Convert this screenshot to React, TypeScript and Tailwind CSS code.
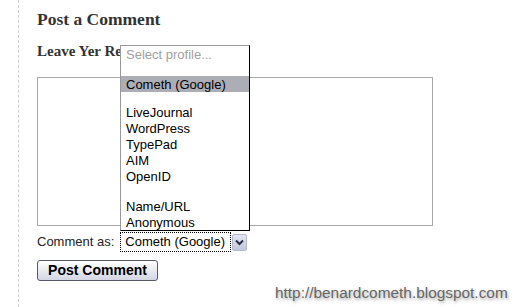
import React from 'react';

const profiles = [
  { label: 'Select profile...', muted: true },
  { gap: 14 },
  { label: 'Cometh (Google)', active: true },
  { gap: 12 },
  { label: 'LiveJournal' },
  { label: 'WordPress' },
  { label: 'TypePad' },
  { label: 'AIM' },
  { label: 'OpenID' },
  { gap: 14 },
  { label: 'Name/URL' },
  { label: 'Anonymous' },
];

function ProfileList() {
  return (
    <div className="absolute left-[120px] top-[45px] w-[130px] h-[186px] bg-white border border-t-[#999] border-l-[#999] border-r-black border-b-black font-['Liberation_Sans',sans-serif] text-[13px] leading-[16px]">
      {profiles.map((p, i) =>
        p.gap ? (
          <div key={i} style={{ height: p.gap }} />
        ) : (
          <div
            key={i}
            className={
              'h-4 pl-[5px] pt-[1px] whitespace-nowrap ' +
              (p.active ? 'bg-[#adadb5] text-black' : p.muted ? 'text-[#a0a0a0]' : 'text-black')
            }
          >
            {p.label}
          </div>
        )
      )}
    </div>
  );
}

export default function App() {
  return (
    <div className="relative w-[523px] h-[307px] overflow-hidden bg-white">
      <div className="ml-[18px] h-full border-l border-dashed border-[#cfcfcf] pl-[18px] pt-[9px]">
        <h3 className="font-['Liberation_Serif',serif] font-bold text-[17.5px] leading-[20px] text-[#333]">
          Post a Comment
        </h3>
        <p className="mt-[13px] w-[83px] overflow-hidden whitespace-nowrap font-['Liberation_Serif',serif] font-bold text-[15px] leading-[18px] text-[#333]">
          Leave Yer Reply:
        </p>
        <div className="mt-[17px] w-[396px] h-[149px] border border-[#a8a8a8] bg-white" />
        <div className="mt-[6px] flex items-center gap-[6px] font-['Liberation_Sans',sans-serif] text-[13px] text-[#222]">
          <span>Comment as:</span>
          <div className="flex items-center h-[20px]">
            <div className="h-[20px] w-[111px] border border-dotted border-black pl-1 leading-[18px] text-black">
              Cometh (Google)
            </div>
            <div className="ml-[1px] h-[17px] w-[15px] rounded-[2px] border border-[#b5b9cc] bg-gradient-to-b from-[#e4e7f2] to-[#c3c7d8] flex items-center justify-center">
              <svg width="9" height="7" viewBox="0 0 9 7">
                <path d="M1 1.5 L4.5 5 L8 1.5" fill="none" stroke="#2a2f4a" strokeWidth="2" />
              </svg>
            </div>
          </div>
        </div>
        <button className="mt-[8px] w-[121px] h-[21px] rounded-[3px] border border-[#555a66] bg-gradient-to-b from-white to-[#d3d6e3] font-['Liberation_Sans',sans-serif] font-bold text-[14px] leading-[19px] text-black">
          Post Comment
        </button>
      </div>

      <ProfileList />

      <div className="absolute left-[275px] top-[281px] font-['Liberation_Sans',sans-serif] text-[15.4px] text-[#666] [text-shadow:1px_2px_3px_rgba(0,0,0,0.35)]">
        http://benardcometh.blogspot.com
      </div>
    </div>
  );
}
